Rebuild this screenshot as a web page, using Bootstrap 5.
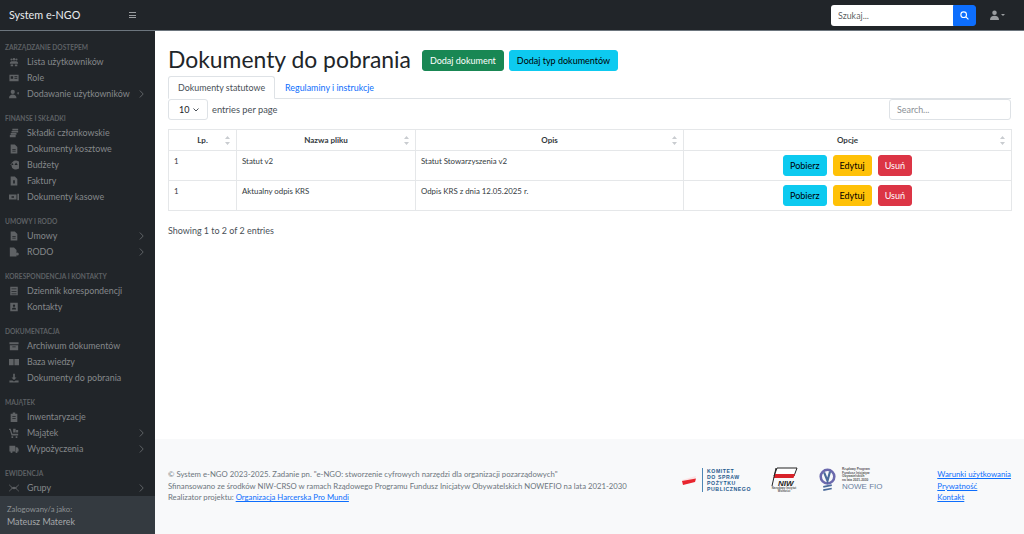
<!DOCTYPE html>
<html lang="pl">
<head>
<meta charset="utf-8">
<title>Dokumenty do pobrania</title>
<link rel="stylesheet" href="https://cdn.jsdelivr.net/npm/bootstrap@5.3.0/dist/css/bootstrap.min.css">
<style>
html,body{height:534px;overflow:hidden}
body{font-family:Lato,"Noto Sans",sans-serif;font-size:8.9px;color:#212529}
.topbar{height:31px;background:#212529;border-bottom:1px solid #6c757d;padding:0 12px 0 9px}
.brand-name{font-size:10.8px;color:#e9ecef;width:120px}
.burger{width:7px;height:6px;border-top:1px solid #9a9da0;border-bottom:1px solid #9a9da0;position:relative}
.burger::after{content:"";position:absolute;left:0;right:0;top:1.5px;height:1px;background:#9a9da0}
.top-search{width:145px;height:21px}
.top-search input{height:21px;min-height:0;font-size:8.9px;padding:0 7px;border-radius:3px 0 0 3px;border:0;box-shadow:none}
.top-search button{width:23px;height:21px;padding:0;border-radius:0 3px 3px 0;display:flex;align-items:center;justify-content:center}
.user-menu{margin-left:14px;color:#9a9da0;width:22px}
.caret-down{border:2px solid transparent;border-top:2.5px solid #9a9da0;border-bottom:0;margin-left:2px}
.shell{height:503px}
.side{width:155px;background:#212529;flex:none}
.side-scroll{flex:1 1 auto;overflow:hidden;padding-top:9.5px}
.side-title{font-size:6.6px;font-weight:700;color:#5d6064;height:13px;line-height:13px;margin:0 0 0 5px;white-space:nowrap}
.side-group{margin-bottom:10px}
.side-item{height:16px;color:#85888b;font-size:8.9px;padding:0 11px 0 9px;white-space:nowrap}
.side-ico{width:10px;height:10px;margin-right:8px;flex:none;fill:#5f6265}
.side-chev{margin-left:auto;width:5px;height:8px;fill:none;stroke:#5f6265;stroke-width:1}
.side-foot{height:38px;background:#343a40;padding:7px 7px;flex:none;font-size:8.9px}
.side-foot .who-label{color:#8d9194;font-size:7.7px;line-height:12px}
.side-foot .who-name{color:#a5a8ab;line-height:14px}
.main-col{min-width:0}
.work{padding:14px 13px 0;flex:1 1 auto}
.page-head{height:31px}
.page-title{font-size:22.9px;line-height:30px;margin:0 11px 3px 0;font-weight:400;color:#212529}
.btn-mini{font-size:9px;padding:0;height:21px;line-height:19px;border-radius:3px;border-width:1px}
.head-btn{padding:0 7px;margin-right:5px}
.tab-strip{height:23px;border-bottom:1px solid #dee2e6;--bs-nav-tabs-border-width:1px}
.tab-strip .nav-link{font-size:8.9px;height:23px;padding:0 9px;line-height:22px;border-radius:3px 3px 0 0;color:#0d6efd}
.tab-strip .nav-link.active{color:#495057}
.dt-bar{height:30px}
.len-pick{width:40px;height:21px;border:1px solid #dee2e6;border-radius:3px;font-size:9px;padding-left:10px;margin-right:4px;color:#212529}
.dt-label{line-height:21px;font-size:9.3px;color:#495057}
.dt-search{width:122px;height:21px;border:1px solid #dee2e6;border-radius:3px;font-size:8.9px;padding:0 7px;color:#8a9096}
.doc-table{width:843px;table-layout:fixed;margin:0;font-size:7.85px;border-color:#e5e7e9;color:#343a40}
.doc-table th{height:21px;padding:0 5px;text-align:center;font-weight:700;font-size:8px;position:relative;vertical-align:middle}
.doc-table td{height:30px;padding:4px 5px 0;vertical-align:top;line-height:12px}
.doc-table td.acts{padding-top:3.500px;text-align:center}
.doc-table .btn-mini{margin:0 2px;padding:0 6px}
.sort-mark{position:absolute;right:6px;top:6px;width:5px;height:9px}
.dt-info{margin-top:13px;font-size:8.95px;color:#495057}
.page-foot{height:95px;background:#f8f9fa;padding:0 13px;font-size:7.75px;color:#6c757d;flex:none;line-height:11.7px}
.foot-text{width:514px;flex:none}
.page-foot a{color:#0d6efd}
.foot-logos{flex:none;margin-bottom:13px}
.foot-links{margin-left:auto;font-size:7.8px;line-height:11.500px}
.kom-text{font-family:"Liberation Sans",sans-serif;font-size:5.2px;font-weight:700;letter-spacing:.57px;line-height:6px;color:#1f5a8e;border-left:1px solid #4d86b5;padding-left:4px;margin-left:5px}
.niw-wrap{margin:0 19px 0 17px;width:32px;text-align:center}
.fio-text{margin-left:6px}
.fio-side{color:#6a7fa0;font-size:8px;line-height:10px;font-family:"Liberation Sans",sans-serif}
.fio-small{font-size:3.200px;line-height:3.500px;color:#555;font-weight:700;white-space:nowrap;font-family:"Liberation Sans",sans-serif}
.niw-small{white-space:normal;font-size:2.800px;line-height:3.200px}
</style>
</head>
<body>
<svg width="0" height="0" class="position-absolute">
<defs>
<symbol id="i-users" viewBox="0 0 12 12"><circle cx="3" cy="3" r="1.3"/><circle cx="6" cy="2.6" r="1.5"/><circle cx="9" cy="3" r="1.3"/><path d="M1 8c0-2 1-3 2-3h6c1 0 2 1 2 3zM2 9h3v2H2zM7 9h3v2H7z"/></symbol>
<symbol id="i-card" viewBox="0 0 12 12"><path fill-rule="evenodd" d="M.5 2h11v8H.5zM2 4v3h3V4zm4.500 0v1H10V4zm0 2v1H10V6z"/></symbol>
<symbol id="i-useradd" viewBox="0 0 12 12"><circle cx="4.500" cy="3.500" r="2.500"/><path d="M0 11c0-3 2-4.500 4.500-4.500S9 8 9 11zM9.500 4.500h1V3.500h1v1H12v1h-.5v1h-1v-1h-1z"/></symbol>
<symbol id="i-coins" viewBox="0 0 12 12"><path d="M4 1h7v2H4zM3 3.500h8v2H3zM2 6h7v2H2zM1 8.500h7v2.500H1z"/></symbol>
<symbol id="i-file" viewBox="0 0 12 12"><path fill-rule="evenodd" d="M2 .5h5l3 3v8H2zM4 6v1h4V6zm0 2v1h4V8z"/></symbol>
<symbol id="i-scale" viewBox="0 0 12 12"><path fill-rule="evenodd" d="M6 1a5.500 5.500 0 1 1 0 10A5.500 5.500 0 0 1 6 1zM1.500 6h4L3.500 3zM6.500 6h4L8.500 3z"/></symbol>
<symbol id="i-inv" viewBox="0 0 12 12"><path fill-rule="evenodd" d="M2 .5h5l3 3v8H2zM5 5v4h2V5z"/></symbol>
<symbol id="i-cash" viewBox="0 0 12 12"><path fill-rule="evenodd" d="M0 3h9v6H0zM3 5v2h3V5z"/><path d="M10 2h2v8h-2z"/></symbol>
<symbol id="i-rodo" viewBox="0 0 12 12"><path d="M1 .5h5l3 3v8H1z"/><circle cx="10" cy="8.500" r="1.800"/></symbol>
<symbol id="i-book" viewBox="0 0 12 12"><path fill-rule="evenodd" d="M1.500 1h9v10h-9zM3 3v1h6V3zm0 3v1h6V6zm0 3v.8h6V9z"/></symbol>
<symbol id="i-contact" viewBox="0 0 12 12"><path fill-rule="evenodd" d="M1.500 1h9v10h-9zM6 3a1.400 1.400 0 1 0 0 2.800A1.400 1.400 0 0 0 6 3zM3.500 9h5c0-1.500-1-2.500-2.500-2.500S3.500 7.500 3.500 9z"/></symbol>
<symbol id="i-archive" viewBox="0 0 12 12"><path fill-rule="evenodd" d="M.5 1.500h11v2.500H.5zM1 5h10v6H1zm3 1.500v1h4v-1z"/></symbol>
<symbol id="i-open" viewBox="0 0 12 12"><path d="M0 2.500h5.500v7.500H0zM6.500 2.500H12v7.500H6.500z"/></symbol>
<symbol id="i-dl" viewBox="0 0 12 12"><path d="M5 1h2v4.500h2L6 8.500 3 5.500h2zM.5 9h3.500l2 1.300L8 9h3.500v2.500H.5z"/></symbol>
<symbol id="i-clip" viewBox="0 0 12 12"><path fill-rule="evenodd" d="M4.500 .5h3V2H10v10H2V2h2.500zM4 5v1h4V5zm0 2.500v1h4v-1z"/></symbol>
<symbol id="i-cart" viewBox="0 0 12 12"><path d="M0 1h2l2 6h7V9H3L1 2.500H0zM5 1h3v4.500H5zM8.500 2.500h2.500v3H8.500zM3 10h2v2H3zM8 10h2v2H8z"/></symbol>
<symbol id="i-truck" viewBox="0 0 12 12"><path fill-rule="evenodd" d="M.5 2h7v7H.5zM8 4h2l1.500 2v3H8z"/><circle cx="3" cy="9.500" r="1.300"/><circle cx="9" cy="9.500" r="1.300"/></symbol>
<symbol id="i-net" viewBox="0 0 12 12"><path d="M0 1.500 4 5h4l4-3.500v.8L9 5.500v1l3 3.200v.8L8 7H4l-4 3.500v-.8l3-3.200v-1L0 2.300z"/><circle cx="6" cy="6" r="1.600"/></symbol>
<symbol id="i-chev" viewBox="0 0 5 8"><path d="M.8.5 4.200 4 .8 7.500"/></symbol>
<symbol id="i-sort" viewBox="0 0 5 9"><path d="M2.500 0 5 3H0zM2.500 9 0 6h5z" fill="#c9ccd0"/></symbol>
</defs>
</svg>

<header class="topbar d-flex align-items-center">
  <div class="brand-name">System e-NGO</div>
  <div class="burger"></div>
  <div class="ms-auto d-flex align-items-center">
    <form class="input-group flex-nowrap top-search">
      <input class="form-control" type="text" placeholder="Szukaj...">
      <button class="btn btn-primary" type="button" aria-label="Szukaj"><svg width="9" height="9" viewBox="0 0 16 16" fill="none" stroke="#fff" stroke-width="2"><circle cx="6.500" cy="6.500" r="5"/><path d="m10.500 10.500 4.500 4.500"/></svg></button>
    </form>
    <div class="user-menu d-flex align-items-center"><svg width="9" height="10" viewBox="0 0 12 13" fill="#9a9da0"><circle cx="6" cy="3.500" r="3"/><path d="M0 13c0-4 2.500-5.500 6-5.500s6 1.500 6 5.500z"/></svg><span class="caret-down"></span></div>
  </div>
</header>

<div class="shell d-flex">
  <nav class="side d-flex flex-column">
    <div class="side-scroll">
      <div class="side-group">
        <div class="side-title">ZARZĄDZANIE DOSTĘPEM</div>
        <div class="side-item d-flex align-items-center"><svg class="side-ico"><use href="#i-users"/></svg>Lista użytkowników</div>
        <div class="side-item d-flex align-items-center"><svg class="side-ico"><use href="#i-card"/></svg>Role</div>
        <div class="side-item d-flex align-items-center"><svg class="side-ico"><use href="#i-useradd"/></svg>Dodawanie użytkowników<svg class="side-chev"><use href="#i-chev"/></svg></div>
      </div>
      <div class="side-group">
        <div class="side-title">FINANSE I SKŁADKI</div>
        <div class="side-item d-flex align-items-center"><svg class="side-ico"><use href="#i-coins"/></svg>Składki członkowskie</div>
        <div class="side-item d-flex align-items-center"><svg class="side-ico"><use href="#i-file"/></svg>Dokumenty kosztowe</div>
        <div class="side-item d-flex align-items-center"><svg class="side-ico"><use href="#i-scale"/></svg>Budżety</div>
        <div class="side-item d-flex align-items-center"><svg class="side-ico"><use href="#i-inv"/></svg>Faktury</div>
        <div class="side-item d-flex align-items-center"><svg class="side-ico"><use href="#i-cash"/></svg>Dokumenty kasowe</div>
      </div>
      <div class="side-group">
        <div class="side-title">UMOWY I RODO</div>
        <div class="side-item d-flex align-items-center"><svg class="side-ico"><use href="#i-file"/></svg>Umowy<svg class="side-chev"><use href="#i-chev"/></svg></div>
        <div class="side-item d-flex align-items-center"><svg class="side-ico"><use href="#i-rodo"/></svg>RODO<svg class="side-chev"><use href="#i-chev"/></svg></div>
      </div>
      <div class="side-group">
        <div class="side-title">KORESPONDENCJA I KONTAKTY</div>
        <div class="side-item d-flex align-items-center"><svg class="side-ico"><use href="#i-book"/></svg>Dziennik korespondencji</div>
        <div class="side-item d-flex align-items-center"><svg class="side-ico"><use href="#i-contact"/></svg>Kontakty</div>
      </div>
      <div class="side-group">
        <div class="side-title">DOKUMENTACJA</div>
        <div class="side-item d-flex align-items-center"><svg class="side-ico"><use href="#i-archive"/></svg>Archiwum dokumentów</div>
        <div class="side-item d-flex align-items-center"><svg class="side-ico"><use href="#i-open"/></svg>Baza wiedzy</div>
        <div class="side-item d-flex align-items-center"><svg class="side-ico"><use href="#i-dl"/></svg>Dokumenty do pobrania</div>
      </div>
      <div class="side-group">
        <div class="side-title">MAJĄTEK</div>
        <div class="side-item d-flex align-items-center"><svg class="side-ico"><use href="#i-clip"/></svg>Inwentaryzacje</div>
        <div class="side-item d-flex align-items-center"><svg class="side-ico"><use href="#i-cart"/></svg>Majątek<svg class="side-chev"><use href="#i-chev"/></svg></div>
        <div class="side-item d-flex align-items-center"><svg class="side-ico"><use href="#i-truck"/></svg>Wypożyczenia<svg class="side-chev"><use href="#i-chev"/></svg></div>
      </div>
      <div class="side-group">
        <div class="side-title">EWIDENCJA</div>
        <div class="side-item d-flex align-items-center"><svg class="side-ico"><use href="#i-net"/></svg>Grupy<svg class="side-chev"><use href="#i-chev"/></svg></div>
      </div>
    </div>
    <div class="side-foot">
      <div class="who-label">Zalogowany/a jako:</div>
      <div class="who-name">Mateusz Materek</div>
    </div>
  </nav>

  <div class="main-col flex-grow-1 d-flex flex-column">
    <main class="work">
      <div class="page-head d-flex align-items-center">
        <h1 class="page-title">Dokumenty do pobrania</h1>
        <a class="btn btn-success btn-mini head-btn" href="#">Dodaj dokument</a>
        <a class="btn btn-info btn-mini head-btn" href="#">Dodaj typ dokumentów</a>
      </div>
      <ul class="nav nav-tabs tab-strip">
        <li class="nav-item"><a class="nav-link active" href="#">Dokumenty statutowe</a></li>
        <li class="nav-item"><a class="nav-link" href="#">Regulaminy i instrukcje</a></li>
      </ul>
      <div class="dt-bar d-flex align-items-start justify-content-between">
        <div class="d-flex align-items-center">
          <div class="len-pick d-flex align-items-center">10<svg class="ms-1" width="6" height="4" viewBox="0 0 6 4" fill="none" stroke="#495057"><path d="m.5.5 2.500 2.500L5.500.5"/></svg></div>
          <span class="dt-label">entries per page</span>
        </div>
        <div class="dt-search d-flex align-items-center">Search...</div>
      </div>
      <table class="table table-bordered doc-table">
        <colgroup><col style="width:68px"><col style="width:179px"><col style="width:268px"><col style="width:328px"></colgroup>
        <thead>
          <tr>
            <th>Lp.<svg class="sort-mark"><use href="#i-sort"/></svg></th>
            <th>Nazwa pliku<svg class="sort-mark"><use href="#i-sort"/></svg></th>
            <th>Opis<svg class="sort-mark"><use href="#i-sort"/></svg></th>
            <th>Opcje<svg class="sort-mark"><use href="#i-sort"/></svg></th>
          </tr>
        </thead>
        <tbody>
          <tr><td>1</td><td>Statut v2</td><td>Statut Stowarzyszenia v2</td>
            <td class="acts"><a class="btn btn-info btn-mini" href="#">Pobierz</a> <a class="btn btn-warning btn-mini" href="#">Edytuj</a> <a class="btn btn-danger btn-mini" href="#">Usuń</a></td></tr>
          <tr><td>1</td><td>Aktualny odpis KRS</td><td>Odpis KRS z dnia 12.05.2025 r.</td>
            <td class="acts"><a class="btn btn-info btn-mini" href="#">Pobierz</a> <a class="btn btn-warning btn-mini" href="#">Edytuj</a> <a class="btn btn-danger btn-mini" href="#">Usuń</a></td></tr>
        </tbody>
      </table>
      <div class="dt-info">Showing 1 to 2 of 2 entries</div>
    </main>
    <footer class="page-foot d-flex align-items-center">
      <div class="foot-text">
        © System e-NGO 2023-2025. Zadanie pn. "e-NGO: stworzenie cyfrowych narzędzi dla organizacji pozarządowych"<br>
        Sfinansowano ze środków NIW-CRSO w ramach Rządowego Programu Fundusz Inicjatyw Obywatelskich NOWEFIO na lata 2021-2030<br>
        Realizator projektu: <a href="#">Organizacja Harcerska Pro Mundi</a>
      </div>
      <div class="foot-logos d-flex align-items-center">
        <svg width="15" height="9" viewBox="0 0 15 9"><path d="M0 4 14 0 13 3 0 6z" fill="#fbe3e4"/><path d="M0 5 14 2.500 13 6 1 9z" fill="#e8252e"/></svg>
        <div class="kom-text">KOMITET<br>DO SPRAW<br>POŻYTKU<br>PUBLICZNEGO</div>
        <div class="niw-wrap d-flex flex-column align-items-center">
          <svg width="30" height="20" viewBox="0 0 30 20"><path d="M8 1h20l-3 8H5z" fill="#fff" stroke="#222"/><path d="M6 7h20l-1.500 4H4.500z" fill="#d8232a"/><path d="M7 1 3 19" stroke="#222" fill="none"/><text x="9" y="19" font-size="8" font-style="italic" font-weight="700" fill="#222" font-family="Liberation Sans">NIW</text></svg>
          <div class="fio-small niw-small">Narodowy Instytut Wolności</div>
        </div>
        <svg width="17" height="24" viewBox="0 0 20 28"><circle cx="10" cy="10" r="8" fill="none" stroke="#6b69ad" stroke-width="3"/><path d="M6 5l4 10 3-11" fill="none" stroke="#4a6a9a" stroke-width="2.500"/><path d="M5 22l10-2M5 26l10-2" stroke="#4a6a9a" stroke-width="2"/></svg>
        <div class="fio-text">
          <div class="fio-small">Rządowy Program<br>Fundusz Inicjatyw<br>Obywatelskich<br>na lata 2021-2030</div>
          <div class="fio-side">NOWE FIO</div>
        </div>
      </div>
      <div class="foot-links">
        <a class="d-block" href="#">Warunki użytkowania</a>
        <a class="d-block" href="#">Prywatność</a>
        <a class="d-block" href="#">Kontakt</a>
      </div>
    </footer>
  </div>
</div>
</body>
</html>
